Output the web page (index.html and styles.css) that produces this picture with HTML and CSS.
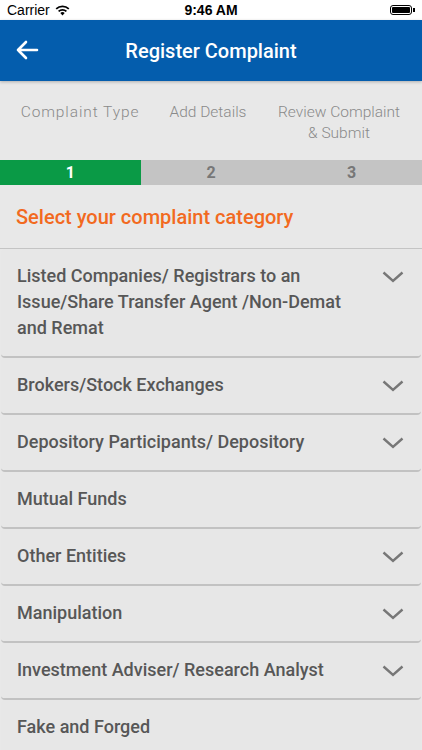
FILE: index.html
```html
<!DOCTYPE html>
<html lang="en">
<head>
  <meta charset="UTF-8">
  <meta name="viewport" content="width=device-width, initial-scale=1.0">
  <title>Register Complaint</title>
  <link rel="stylesheet" href="styles.css">
</head>
<body>
  <div class="status-bar">
    <div class="carrier">
      Carrier
      <svg class="wifi" width="15" height="11" viewBox="0 0 15 11">
        <path d="M7.5 10.5 L5.3 8.1 A3.2 3.2 0 0 1 9.7 8.1 Z" fill="#000"/>
        <path d="M3.6 6.4 A5.6 5.6 0 0 1 11.4 6.4" stroke="#000" stroke-width="1.7" fill="none"/>
        <path d="M1.2 3.9 A9 9 0 0 1 13.8 3.9" stroke="#000" stroke-width="1.7" fill="none"/>
      </svg>
    </div>
    <div class="time">9:46 AM</div>
    <div class="battery">
      <span class="battery-body"><span class="battery-fill"></span></span>
      <span class="battery-tip"></span>
    </div>
  </div>

  <header class="app-header">
    <svg class="back" width="24" height="20" viewBox="0 0 24 20">
      <path d="M22 10 H3 M11 2 L3 10 L11 18" stroke="#fff" stroke-width="2.6" fill="none" stroke-linecap="round" stroke-linejoin="round"/>
    </svg>
    <h1>Register Complaint</h1>
  </header>

  <div class="steps">
    <div class="step type">Complaint Type</div>
    <div class="step details">Add Details</div>
    <div class="step review">Review Complaint<br>&amp; Submit</div>
  </div>

  <div class="progress">
    <div class="progress-item active">1</div>
    <div class="progress-item">2</div>
    <div class="progress-item">3</div>
  </div>

  <div class="section-title">Select your complaint category</div>

  <ul class="categories">
    <li class="category">
      <span>Listed Companies/ Registrars to an Issue/Share Transfer Agent /Non-Demat and Remat</span>
      <svg class="chevron" width="22" height="12" viewBox="0 0 22 12"><path d="M1.5 1.5 L11 10 L20.5 1.5" stroke="#777" stroke-width="2.4" fill="none"/></svg>
    </li>
    <li class="category">
      <span>Brokers/Stock Exchanges</span>
      <svg class="chevron" width="22" height="12" viewBox="0 0 22 12"><path d="M1.5 1.5 L11 10 L20.5 1.5" stroke="#777" stroke-width="2.4" fill="none"/></svg>
    </li>
    <li class="category">
      <span>Depository Participants/ Depository</span>
      <svg class="chevron" width="22" height="12" viewBox="0 0 22 12"><path d="M1.5 1.5 L11 10 L20.5 1.5" stroke="#777" stroke-width="2.4" fill="none"/></svg>
    </li>
    <li class="category">
      <span>Mutual Funds</span>
    </li>
    <li class="category">
      <span>Other Entities</span>
      <svg class="chevron" width="22" height="12" viewBox="0 0 22 12"><path d="M1.5 1.5 L11 10 L20.5 1.5" stroke="#777" stroke-width="2.4" fill="none"/></svg>
    </li>
    <li class="category">
      <span>Manipulation</span>
      <svg class="chevron" width="22" height="12" viewBox="0 0 22 12"><path d="M1.5 1.5 L11 10 L20.5 1.5" stroke="#777" stroke-width="2.4" fill="none"/></svg>
    </li>
    <li class="category">
      <span>Investment Adviser/ Research Analyst</span>
      <svg class="chevron" width="22" height="12" viewBox="0 0 22 12"><path d="M1.5 1.5 L11 10 L20.5 1.5" stroke="#777" stroke-width="2.4" fill="none"/></svg>
    </li>
    <li class="category">
      <span>Fake and Forged</span>
    </li>
  </ul>
</body>
</html>
```

FILE: styles.css
```css
body {
  margin: 0;
  padding: 0;
  background-color: #e8e8e8;
  font-family: Roboto, 'Noto Sans', sans-serif;
  overflow: hidden;
}

.status-bar {
  height: 20px;
  background-color: #fff;
  display: flex;
  align-items: center;
  justify-content: space-between;
  padding: 0 7px;
  font-family: 'Liberation Sans', Arial, sans-serif;
  font-size: 14px;
  color: #000;
}

.carrier {
  display: flex;
  align-items: center;
  gap: 5px;
  width: 90px;
}

.time {
  font-weight: bold;
  font-size: 14px;
}

.battery {
  width: 90px;
  display: flex;
  justify-content: flex-end;
  align-items: center;
}

.battery-body {
  width: 22px;
  height: 10px;
  border: 1px solid #000;
  border-radius: 3px;
  padding: 1px;
  box-sizing: border-box;
  display: flex;
}

.battery-fill {
  flex: 1;
  background-color: #000;
  border-radius: 1px;
}

.battery-tip {
  width: 1.5px;
  height: 4px;
  background-color: #000;
  margin-left: 1px;
}

.app-header {
  height: 61px;
  background-color: #045dad;
  display: flex;
  align-items: center;
  justify-content: center;
  position: relative;
  box-shadow: 0 1px 3px rgba(0, 0, 0, 0.25);
}

.back {
  position: absolute;
  left: 15px;
  top: 20px;
}

.app-header h1 {
  margin: 0;
  color: #fff;
  font-size: 20px;
  font-weight: 500;
}

.steps {
  display: flex;
  height: 79px;
  box-sizing: border-box;
  padding-top: 21px;
}

.step {
  text-align: center;
  font-size: 15.5px;
  font-weight: 300;
  line-height: 21px;
  color: #8a8a8a;
  white-space: nowrap;
}

.step.type {
  width: 160px;
  letter-spacing: 0.9px;
}

.step.details {
  width: 96px;
}

.step.review {
  flex: 1;
}

.progress {
  display: flex;
  height: 25px;
  background-color: #c4c4c4;
}

.progress-item {
  flex: 1;
  display: flex;
  align-items: center;
  justify-content: center;
  font-size: 16px;
  font-weight: bold;
  color: #777;
}

.progress-item.active {
  background-color: #0a9a46;
  color: #fff;
}

.section-title {
  height: 63px;
  display: flex;
  align-items: center;
  padding-left: 16px;
  color: #f26a1f;
  font-size: 20px;
  font-weight: 500;
  border-bottom: 1px solid #c4c4c4;
}

.categories {
  list-style: none;
  margin: 0;
  padding: 0;
}

.category {
  display: flex;
  align-items: flex-start;
  justify-content: space-between;
  padding: 14px 17px 15px 16px;
  margin: 0 1px;
  border-bottom: 2px solid #c2c2c2;
  border-radius: 4px;
  background-color: #e7e7e7;
  font-size: 18px;
  font-weight: 500;
  line-height: 26px;
  color: #575757;
}

.category span {
  max-width: 340px;
}

.chevron {
  flex-shrink: 0;
  margin-top: 8px;
}
```
